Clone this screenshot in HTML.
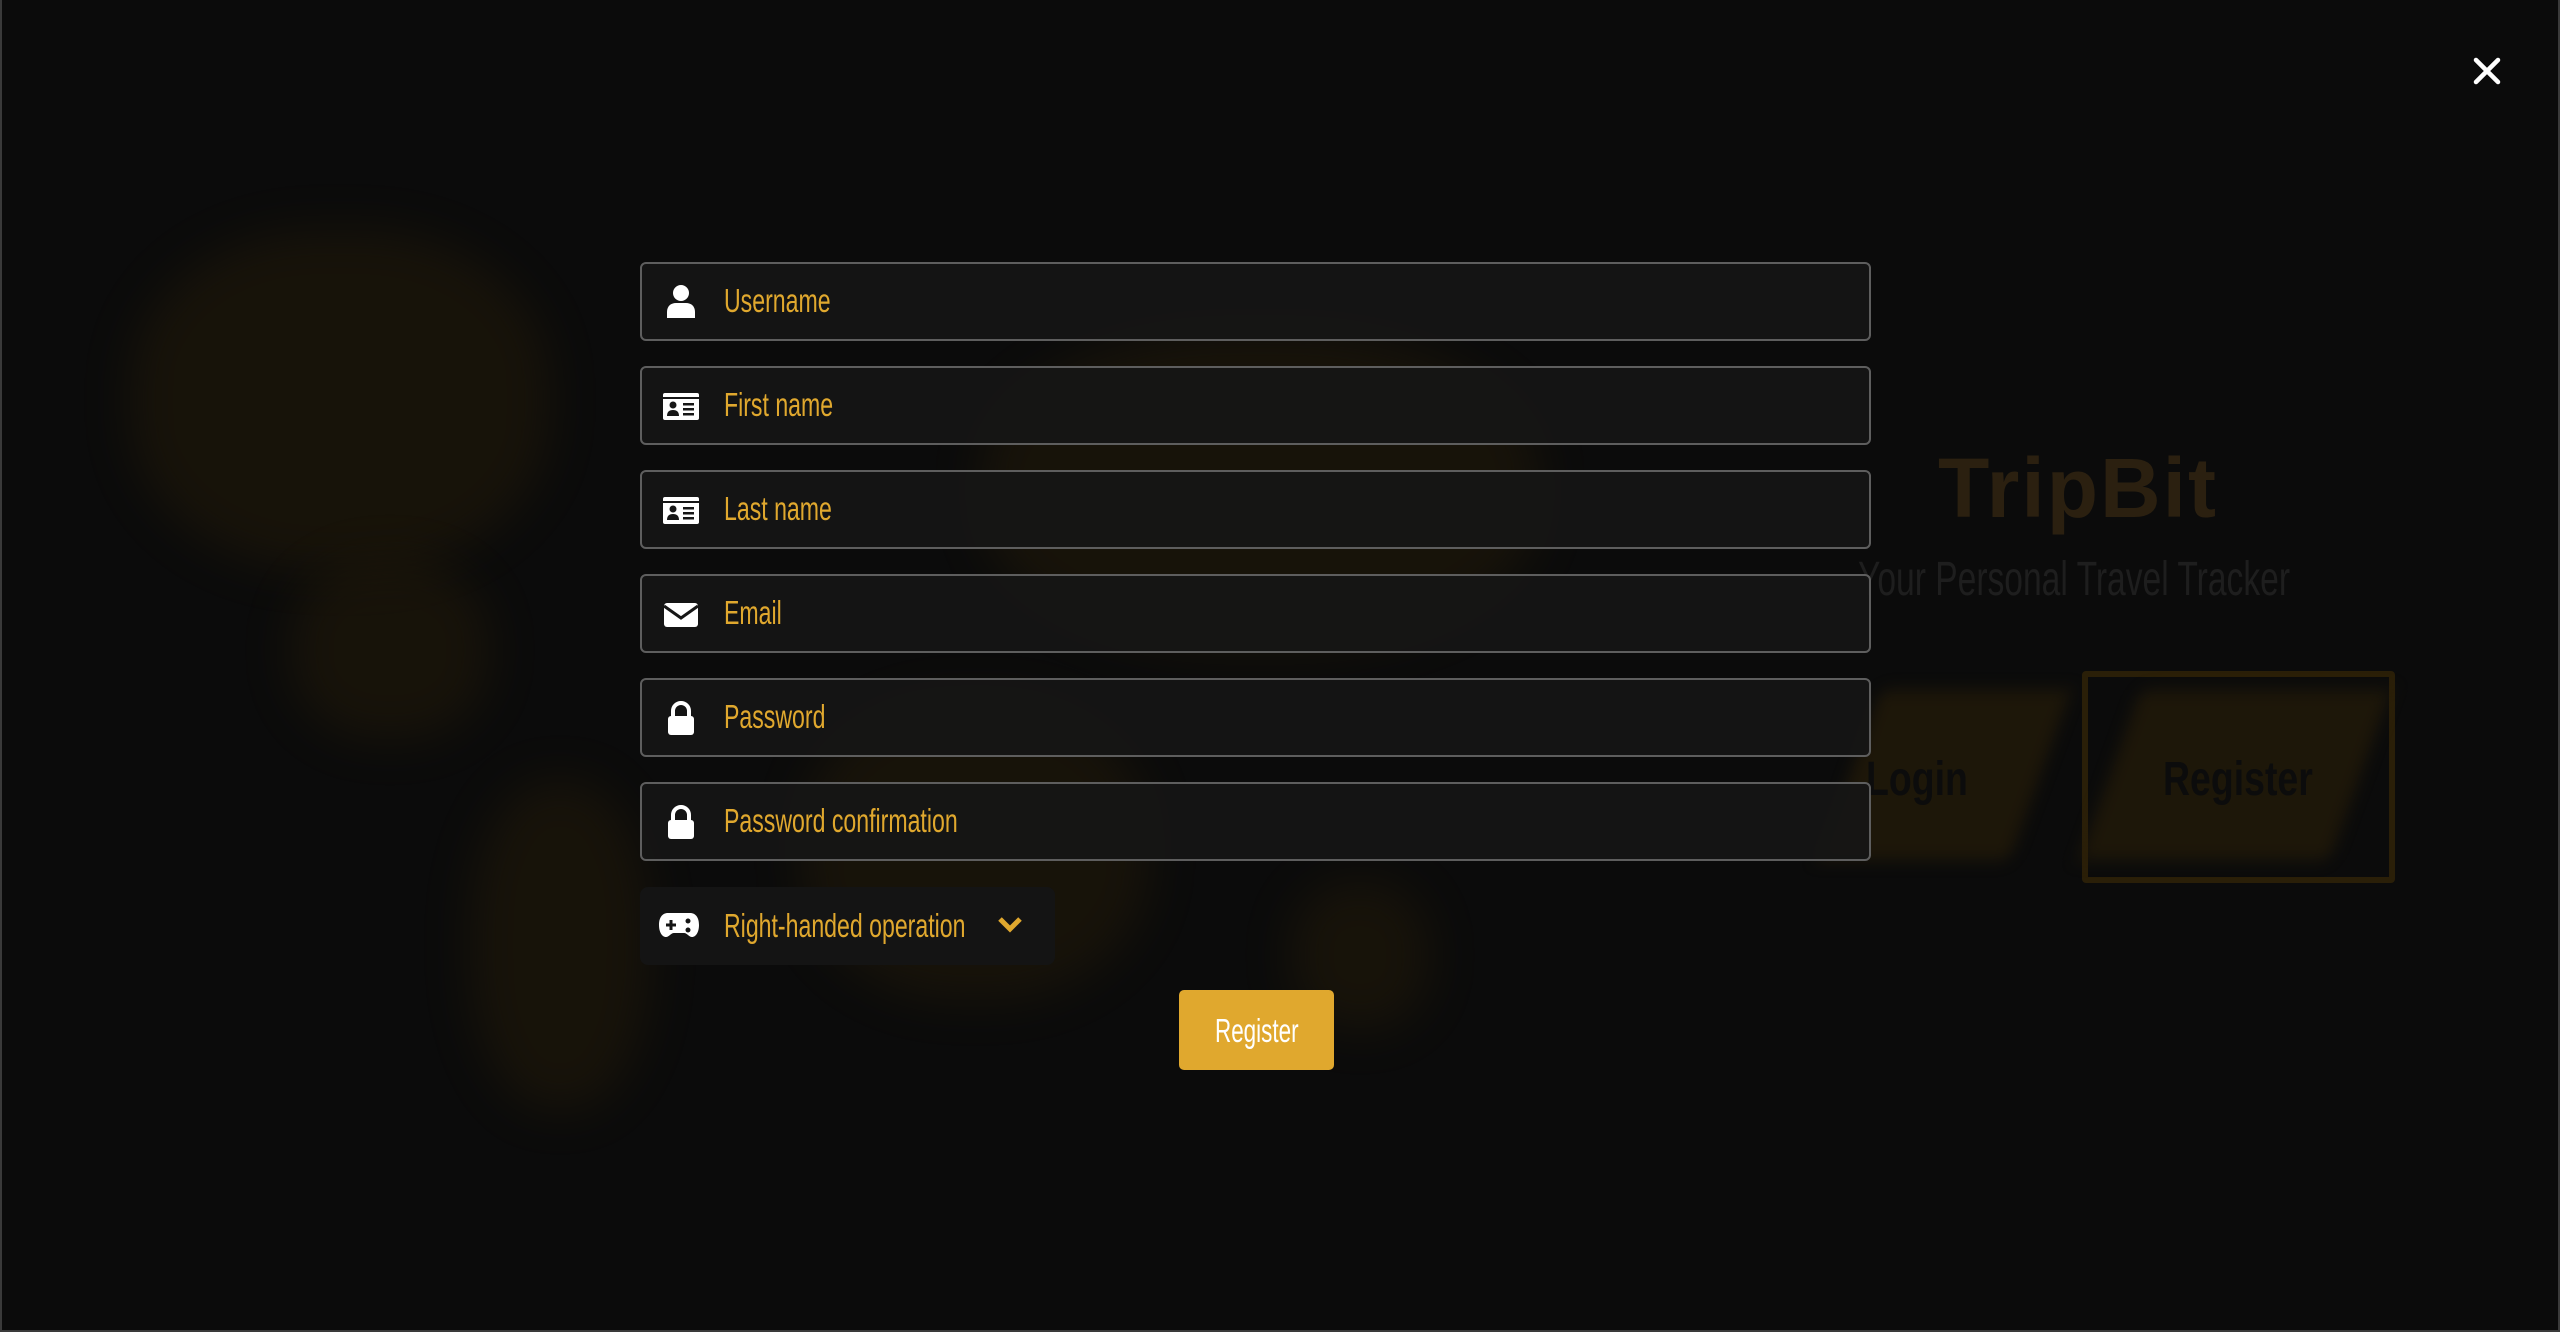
<!DOCTYPE html>
<html><head><meta charset="utf-8"><style>
*{box-sizing:border-box;margin:0;padding:0}
html,body{width:2560px;height:1332px;overflow:hidden;background:#0b0b0b;font-family:"Liberation Sans",sans-serif}
.frame{position:absolute;left:0;top:0;width:2560px;height:1332px;border:2px solid #3a3a3a;border-top:none}
.blob{position:absolute;border-radius:45%;background:#2a1f08;filter:blur(22px);opacity:.4}
.in{position:absolute;left:640px;width:1231px;height:79px;border:2px solid #5e5e5e;border-radius:6px;background:rgba(22,22,22,.92)}
.lbl{position:absolute;left:82px;top:18px;color:#e0a82e;font-size:33px;transform:scaleX(.7);transform-origin:left;white-space:nowrap}
.ic{position:absolute;left:20px;top:20px;width:38px;height:36px}
</style></head><body>
<div class="blob" style="left:130px;top:230px;width:420px;height:340px"></div>
<div class="blob" style="left:290px;top:560px;width:200px;height:180px"></div>
<div class="blob" style="left:470px;top:780px;width:180px;height:330px"></div>
<div class="blob" style="left:980px;top:330px;width:560px;height:320px"></div>
<div class="blob" style="left:800px;top:700px;width:350px;height:300px"></div>
<div class="blob" style="left:1290px;top:880px;width:140px;height:150px"></div>

<div style="position:absolute;left:1938px;top:440px;font-size:84px;font-weight:bold;color:#2b2010;letter-spacing:2px">TripBit</div>
<div style="position:absolute;left:1858px;top:552px;font-size:48px;color:#1e1e1e;transform:scaleX(.7);transform-origin:left;white-space:nowrap">Your Personal Travel Tracker</div>
<div style="position:absolute;left:1850px;top:690px;width:190px;height:170px;background:#2a1f08;opacity:.6;filter:blur(8px);transform:skewX(-20deg)"></div>
<div style="position:absolute;left:1866px;top:752px;font-size:48px;font-weight:bold;color:#0c0c0c;transform:scaleX(.78);transform-origin:left">Login</div>
<div style="position:absolute;left:2082px;top:671px;width:313px;height:212px;border:6px solid #2a1f08;border-radius:4px"></div>
<div style="position:absolute;left:2110px;top:690px;width:250px;height:170px;background:#2a1f08;opacity:.6;filter:blur(8px);transform:skewX(-20deg)"></div>
<div style="position:absolute;left:2163px;top:752px;font-size:48px;font-weight:bold;color:#0c0c0c;transform:scaleX(.78);transform-origin:left">Register</div>

<svg style="position:absolute;left:2473px;top:57px" width="28" height="28" viewBox="0 0 28 28"><path d="M3 3L25 25M25 3L3 25" stroke="#fff" stroke-width="4.5" stroke-linecap="round"/></svg>

<div class="in" style="top:262px"><svg class="ic" viewBox="0 0 38 36"><circle cx="19" cy="9" r="8" fill="#fff"/><path d="M5 34v-6c0-6 4-9 9-9h10c5 0 9 3 9 9v6z" fill="#fff"/></svg><span class="lbl">Username</span></div>
<div class="in" style="top:366px"><svg class="ic" viewBox="0 0 38 36"><rect x="1" y="5" width="36" height="27" rx="2" fill="#fff"/><rect x="1" y="9" width="36" height="2" fill="#161616"/><circle cx="11" cy="17" r="3.5" fill="#161616"/><path d="M5 28c0-4 2-6 6-6s6 2 6 6z" fill="#161616"/><rect x="21" y="15" width="11" height="2.5" fill="#161616"/><rect x="21" y="20" width="11" height="2.5" fill="#161616"/><rect x="21" y="25" width="11" height="2.5" fill="#161616"/></svg><span class="lbl">First name</span></div>
<div class="in" style="top:470px"><svg class="ic" viewBox="0 0 38 36"><rect x="1" y="5" width="36" height="27" rx="2" fill="#fff"/><rect x="1" y="9" width="36" height="2" fill="#161616"/><circle cx="11" cy="17" r="3.5" fill="#161616"/><path d="M5 28c0-4 2-6 6-6s6 2 6 6z" fill="#161616"/><rect x="21" y="15" width="11" height="2.5" fill="#161616"/><rect x="21" y="20" width="11" height="2.5" fill="#161616"/><rect x="21" y="25" width="11" height="2.5" fill="#161616"/></svg><span class="lbl">Last name</span></div>
<div class="in" style="top:574px"><svg class="ic" viewBox="0 0 38 36"><rect x="2" y="7" width="34" height="24" rx="3" fill="#fff"/><path d="M2 10l17 12 17-12" stroke="#161616" stroke-width="3" fill="none"/></svg><span class="lbl">Email</span></div>
<div class="in" style="top:678px"><svg class="ic" viewBox="0 0 38 36"><path d="M11 16v-5a8 8 0 0 1 16 0v5" stroke="#fff" stroke-width="4" fill="none"/><rect x="6" y="16" width="26" height="19" rx="3" fill="#fff"/></svg><span class="lbl">Password</span></div>
<div class="in" style="top:782px"><svg class="ic" viewBox="0 0 38 36"><path d="M11 16v-5a8 8 0 0 1 16 0v5" stroke="#fff" stroke-width="4" fill="none"/><rect x="6" y="16" width="26" height="19" rx="3" fill="#fff"/></svg><span class="lbl">Password confirmation</span></div>

<div style="position:absolute;left:640px;top:887px;width:415px;height:78px;background:#141414;border-radius:8px">
<svg style="position:absolute;left:18px;top:23px" width="42" height="30" viewBox="0 0 42 30"><path d="M10 3h22c6 0 9 5 9 12s-3 12-7 12c-3 0-5-4-8-4h-10c-3 0-5 4-8 4-4 0-7-5-7-12S4 3 10 3z" fill="#fff"/><path d="M8 15h10M13 10v10" stroke="#141414" stroke-width="3"/><circle cx="30" cy="11" r="2.5" fill="#141414"/><circle cx="30" cy="20" r="2.5" fill="#141414"/></svg>
<span class="lbl" style="left:84px;top:20px">Right-handed operation</span>
<svg style="position:absolute;left:357px;top:28px" width="26" height="20" viewBox="0 0 26 20"><path d="M3 4l10 10 10-10" stroke="#e0a82e" stroke-width="5" fill="none"/></svg>
</div>

<div style="position:absolute;left:1179px;top:990px;width:155px;height:80px;background:#e0a82e;border-radius:5px">
<span style="position:absolute;left:36px;top:22px;color:#fff;font-size:33px;transform:scaleX(.68);transform-origin:left;white-space:nowrap">Register</span></div>
<div class="frame"></div>
</body></html>
